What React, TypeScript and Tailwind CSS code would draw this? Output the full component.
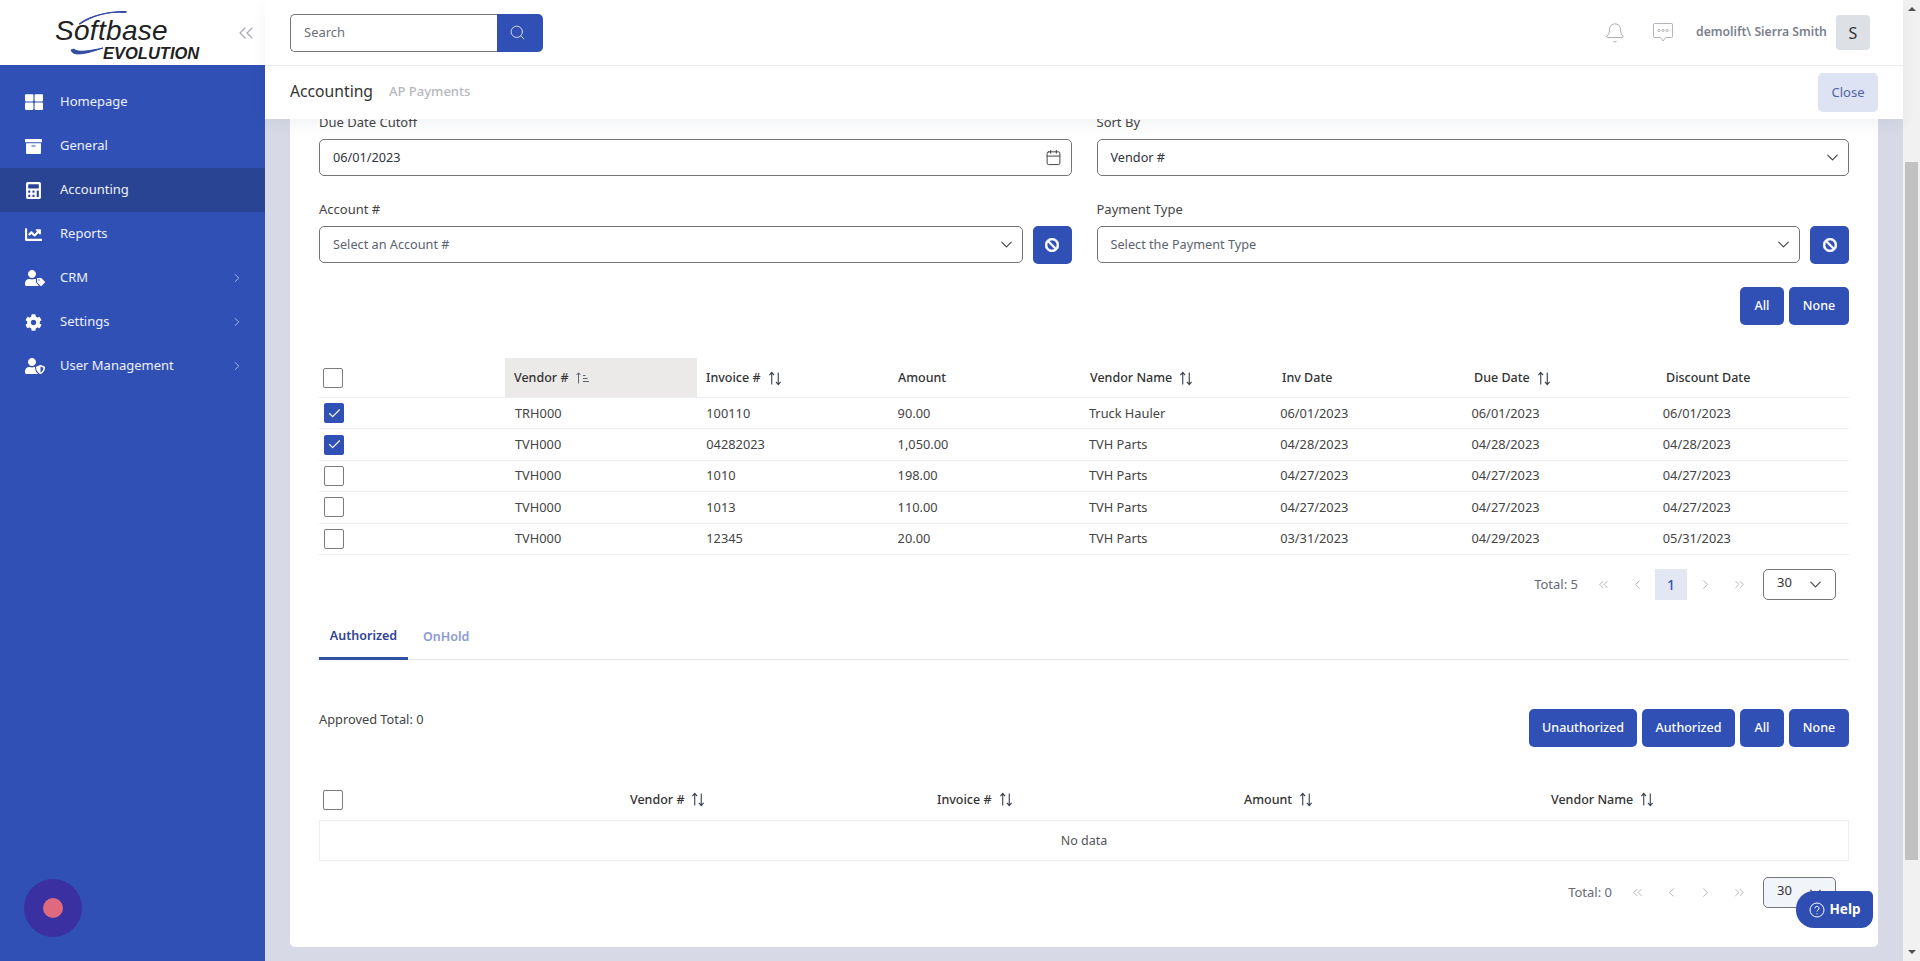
import { Bell, Calendar, ChevronDown, ChevronLeft, ChevronRight, ChevronsLeft, ChevronsRight, Search, Check } from 'lucide-react';
import {
  FaThLarge,
  FaArchive,
  FaCalculator,
  FaChartLine,
  FaUserTag,
  FaCog,
  FaUserShield,
  FaBan,
} from 'react-icons/fa';
import type { IconType } from 'react-icons';

const font = { fontFamily: '"Noto Sans", sans-serif' };

const navItems: { label: string; icon: IconType; active?: boolean; arrow?: boolean; size: number }[] = [
  { label: 'Homepage', icon: FaThLarge, size: 18 },
  { label: 'General', icon: FaArchive, size: 17 },
  { label: 'Accounting', icon: FaCalculator, active: true, size: 17 },
  { label: 'Reports', icon: FaChartLine, size: 17 },
  { label: 'CRM', icon: FaUserTag, arrow: true, size: 20 },
  { label: 'Settings', icon: FaCog, arrow: true, size: 17 },
  { label: 'User Management', icon: FaUserShield, arrow: true, size: 20 },
];

const rows = [
  ['TRH000', '100110', '90.00', 'Truck Hauler', '06/01/2023', '06/01/2023', '06/01/2023'],
  ['TVH000', '04282023', '1,050.00', 'TVH Parts', '04/28/2023', '04/28/2023', '04/28/2023'],
  ['TVH000', '1010', '198.00', 'TVH Parts', '04/27/2023', '04/27/2023', '04/27/2023'],
  ['TVH000', '1013', '110.00', 'TVH Parts', '04/27/2023', '04/27/2023', '04/27/2023'],
  ['TVH000', '12345', '20.00', 'TVH Parts', '03/31/2023', '04/29/2023', '05/31/2023'],
];

function SortIcon() {
  return (
    <svg width="14" height="15" viewBox="0 0 15 16" fill="none" stroke="#3b4250" strokeWidth="1.2">
      <path d="M4 14.5V2M1.500 4.500 4 1.500l2.500 3" />
      <path d="M11 1.500V14M8.500 11.500 11 14.500l2.500-3" />
    </svg>
  );
}

function SortedIcon() {
  return (
    <svg width="15" height="12" viewBox="0 0 15 12" fill="none" stroke="#5b6270" strokeWidth="1">
      <path d="M3.500 11.500V1M1.500 3 3.500 .8 5.500 3" />
      <path d="M8 3.500h2.500M8 6.500h4.500M8 9.500h6" />
    </svg>
  );
}

function CheckBox({ checked }: { checked?: boolean }) {
  return checked ? (
    <span className="flex h-5 w-5 items-center justify-center rounded-[2px] bg-[#3050b5] text-white">
      <Check size={15} strokeWidth={1.8} />
    </span>
  ) : (
    <span className="block h-5 w-5 rounded-[2px] border border-[#7c7c7c] bg-white" />
  );
}

function Field({ value, placeholder, icon }: { value: string; placeholder?: boolean; icon?: 'date' }) {
  return (
    <div
      className={`flex h-[37px] min-w-0 flex-1 items-center justify-between rounded-[5px] border border-[#757575] bg-white pl-[13px] ${
        icon === 'date' ? 'pr-[9px]' : 'pr-[6px]'
      }`}
    >
      <span className={`text-[12.7px] ${placeholder ? 'text-[#5c6370]' : 'text-[#2f3440]'}`}>{value}</span>
      {icon === 'date' ? (
        <Calendar size={17} strokeWidth={1.4} className="text-[#444]" />
      ) : (
        <ChevronDown size={19} strokeWidth={1.4} className="text-[#444]" />
      )}
    </div>
  );
}

function BlueButton({ children, className = '' }: { children: React.ReactNode; className?: string }) {
  return (
    <button className={`flex h-[38px] items-center justify-center rounded-[5px] bg-[#3050b5] text-[12.5px] font-medium text-white ${className}`}>
      {children}
    </button>
  );
}

function ClearButton() {
  return (
    <BlueButton className="w-[39px] shrink-0">
      <FaBan size={14} stroke="currentColor" strokeWidth={30} />
    </BlueButton>
  );
}

function PageSelect({ tinted }: { tinted?: boolean }) {
  return (
    <div
      className={`ml-[7px] flex h-[31px] w-[73px] items-center justify-between rounded-[5px] border border-[#757575] pb-[4px] pl-[13px] pr-[10px] text-[13px] text-[#333] ${
        tinted ? 'bg-[#f1f4f9]' : 'bg-white'
      }`}
    >
      <span>30</span>
      <ChevronDown size={19} strokeWidth={1.4} className="mt-[4px] text-[#444]" />
    </div>
  );
}

function Pager({ total, current }: { total: number; current?: boolean }) {
  const arrow = 'flex h-[31px] w-[34px] items-center justify-center text-[#a0a4ac]';
  return (
    <div className="flex items-center justify-end pr-[13px]">
      <span className="mr-[8px] text-[13px] text-[#666b75]">Total: {total}</span>
      <span className={arrow}><ChevronsLeft size={15} strokeWidth={1.3} /></span>
      <span className={arrow}><ChevronLeft size={15} strokeWidth={1.3} /></span>
      {current && (
        <span className="mx-[1px] flex h-[31px] w-[32px] items-center justify-center bg-[#e3e7f4] text-[14px] font-medium text-[#3050b5]">1</span>
      )}
      <span className={arrow}><ChevronRight size={15} strokeWidth={1.3} /></span>
      <span className={arrow}><ChevronsRight size={15} strokeWidth={1.3} /></span>
      <PageSelect tinted={!current} />
    </div>
  );
}

function Logo() {
  return (
    <div className="relative h-[65px] w-[265px] shrink-0 bg-white">
      <svg className="absolute left-[66px] top-[8px]" width="70" height="50" viewBox="0 0 70 50" fill="none">
        <path d="M13 16C22 8 44 3 60 3.500c1 0 0 1.500-1 1C42 3 26 8 14 16z" fill="#2f4a9f" stroke="#2f4a9f" strokeWidth="1" />
        <path d="M5 42c2 6 12 5 32-2-14 3-26 5-29 1z" fill="#2f4a9f" stroke="#2f4a9f" strokeWidth="1" />
      </svg>
      <span className="absolute left-[55px] top-[13px] text-[28px] leading-[36px] tracking-[0.3px] text-[#222] italic" style={{ fontFamily: '"Liberation Sans", sans-serif' }}>
        Softbase
      </span>
      <span className="absolute left-[103px] top-[43px] text-[16.5px] leading-[20px] font-bold text-[#222] italic" style={{ fontFamily: '"Liberation Sans", sans-serif' }}>
        EVOLUTION
      </span>
      <ChevronsLeft size={24} strokeWidth={1.2} className="absolute left-[234px] top-[21px] text-[#a6a9b0]" />
    </div>
  );
}

function Sidebar() {
  return (
    <aside className="relative flex h-full w-[265px] shrink-0 flex-col bg-[#3050b5]">
      <Logo />
      <nav className="pt-[15px]">
        {navItems.map(({ label, icon: Icon, active, arrow, size }) => (
          <div key={label} className={`flex h-[44px] items-center pl-[25px] pr-[21px] text-white ${active ? 'bg-[#2a4494]' : ''}`}>
            <span className="flex w-[35px] items-center">
              <Icon size={size} />
            </span>
            <span className="flex-1 text-[13px] text-[#eef1fa]">{label}</span>
            {arrow && <ChevronRight size={14} strokeWidth={1.4} className="text-[#c3cdeb]" />}
          </div>
        ))}
      </nav>
      <div className="absolute bottom-[24px] left-[24px] flex h-[58px] w-[58px] items-center justify-center rounded-full bg-[#3a30a2]">
        <span className="h-[20px] w-[20px] rounded-full bg-[#df6a80]" />
      </div>
    </aside>
  );
}

function TopBar() {
  return (
    <header className="relative z-10 shrink-0 bg-white shadow-[0_6px_14px_rgba(40,50,90,0.06)]">
      <div className="flex h-[66px] items-center border-b border-[#e9ebef] pl-[25px] pr-[33px]">
        <div className="flex h-[38px] w-[253px]">
          <div className="flex flex-1 items-center rounded-l-[5px] border border-r-0 border-[#757575] pl-[13px] text-[13px] text-[#6b7078]">
            Search
          </div>
          <div className="flex w-[46px] items-center justify-center rounded-r-[5px] bg-[#3050b5] pr-[5px] text-[#dfe5f6]">
            <Search size={17} strokeWidth={1.3} />
          </div>
        </div>
        <div className="ml-auto flex items-center">
          <Bell size={22} strokeWidth={0.8} className="text-[#8a8e96]" />
          <svg className="ml-[27px]" width="20" height="19" viewBox="0 0 20 19" fill="none" stroke="#a0a4ac" strokeWidth="0.8">
            <path d="M1.500.5h17a1 1 0 0 1 1 1v12a1 1 0 0 1-1 1h-6L10 18l-2.500-3.500h-6a1 1 0 0 1-1-1v-12a1 1 0 0 1 1-1z" />
            <circle cx="6" cy="7.500" r="1.100" />
            <circle cx="10" cy="7.500" r="1.100" />
            <circle cx="14" cy="7.500" r="1.100" />
          </svg>
          <span className="ml-[23px] w-[130px] text-[12.2px] font-semibold whitespace-nowrap text-[#7b7f8c]">demolift\ Sierra Smith</span>
          <span className="ml-[10px] flex h-[35px] w-[34px] items-center justify-center rounded-[4px] bg-[#dde0e4] text-[16px] text-[#333]">S</span>
        </div>
      </div>
      <div className="flex h-[53px] items-center pl-[25px] pr-[25px]">
        <span className="-mt-[2px] text-[15.7px] text-[#333]">Accounting</span>
        <span className="-mt-[2px] ml-[16px] text-[13px] font-medium text-[#b5b7bc]">AP Payments</span>
        <button className="ml-auto flex h-[39px] w-[60px] items-center justify-center rounded-[5px] bg-[#dde3f3] text-[13px] text-[#5264a8]">
          Close
        </button>
      </div>
    </header>
  );
}

function PaymentsTable() {
  const headers = ['Invoice #', 'Amount', 'Vendor Name', 'Inv Date', 'Due Date', 'Discount Date'];
  const sortable = ['Invoice #', 'Vendor Name', 'Due Date'];
  return (
    <div className="mt-[33px]">
      <div className="grid h-[40px] grid-cols-[186px_repeat(7,192px)] items-center border-b border-[#eceef1]">
        <div className="pl-[4px]"><CheckBox /></div>
        <div className="flex h-full items-center gap-[7px] bg-[#ebeae8] pl-[9px] pt-[1px] text-[12.5px] font-medium text-[#333]">
          Vendor # <SortedIcon />
        </div>
        {headers.map((h) => (
          <div key={h} className="flex items-center gap-[7px] pl-[9px] pt-[1px] text-[12.5px] font-medium text-[#333]">
            {h} {sortable.includes(h) && <SortIcon />}
          </div>
        ))}
      </div>
      {rows.map((row, i) => (
        <div key={i} className="grid h-[31.4px] grid-cols-[186px_repeat(7,191.300px)] items-center border-b border-[#eceef1]">
          <div className="pl-[5px]"><CheckBox checked={i < 2} /></div>
          {row.map((cell, j) => (
            <div key={j} className="pl-[10px] text-[12.8px] text-[#444]">{cell}</div>
          ))}
        </div>
      ))}
    </div>
  );
}

function ApprovedTable() {
  return (
    <div className="mt-[33px]">
      <div className="grid h-[40px] grid-cols-[303px_repeat(4,307px)] items-center">
        <div className="pl-[4px]"><CheckBox /></div>
        {['Vendor #', 'Invoice #', 'Amount', 'Vendor Name'].map((h) => (
          <div key={h} className="flex items-center gap-[7px] pl-[8px] text-[12.5px] font-medium text-[#333]">
            {h} <SortIcon />
          </div>
        ))}
      </div>
      <div className="flex h-[41px] items-center justify-center border border-[#eceef1] pt-[1px] text-[12.5px] text-[#555]">No data</div>
    </div>
  );
}

function FakeScrollbar() {
  return (
    <div className="flex h-full w-[17px] shrink-0 flex-col items-center bg-[#f1f1f1]">
      <span className="mt-[7px] h-0 w-0 border-x-[4px] border-b-[4px] border-x-transparent border-b-[#505050]" />
      <span className="mt-[151px] h-[698px] w-[13px] bg-[#c1c1c1]" />
      <span className="mt-auto mb-[7px] h-0 w-0 border-x-[4px] border-t-[4px] border-x-transparent border-t-[#505050]" />
    </div>
  );
}

export default function App() {
  return (
    <div className="relative flex h-screen w-full overflow-hidden bg-[#d7d9e6]" style={font}>
      <Sidebar />
      <div className="flex h-full min-w-0 flex-1 flex-col">
        <TopBar />
        <main className="min-h-0 flex-1 overflow-hidden px-[25px]">
          <div className="-mt-[7px] rounded-b-[5px] bg-white px-[29px] pb-[39px]">
            <div className="flex gap-[25px]">
              <div className="min-w-0 flex-1">
                <label className="block h-[27px] text-[13px] leading-[20px] text-[#444]">Due Date Cutoff</label>
                <div className="flex"><Field value="06/01/2023" icon="date" /></div>
              </div>
              <div className="min-w-0 flex-1">
                <label className="block h-[27px] text-[13px] leading-[20px] text-[#444]">Sort By</label>
                <div className="flex"><Field value="Vendor #" /></div>
              </div>
            </div>
            <div className="mt-[23px] flex gap-[25px]">
              <div className="min-w-0 flex-1">
                <label className="block h-[27px] text-[13px] leading-[20px] text-[#444]">Account #</label>
                <div className="flex items-start gap-[10px]"><Field value="Select an Account #" placeholder /><ClearButton /></div>
              </div>
              <div className="min-w-0 flex-1">
                <label className="block h-[27px] text-[13px] leading-[20px] text-[#444]">Payment Type</label>
                <div className="flex items-start gap-[10px]"><Field value="Select the Payment Type" placeholder /><ClearButton /></div>
              </div>
            </div>
            <div className="mt-[23px] flex justify-end gap-[5px]">
              <BlueButton className="w-[44px]">All</BlueButton>
              <BlueButton className="w-[60px]">None</BlueButton>
            </div>
            <PaymentsTable />
            <div className="mt-[14px]"><Pager total={5} current /></div>
            <div className="mt-[15px] flex h-[45px] border-b border-[#e3e5ea] text-[12.5px] font-semibold">
              <div className="flex h-[45px] w-[89px] items-center justify-center border-b-[3px] border-[#3050a0] text-[#2f4494]">Authorized</div>
              <div className="ml-[15px] flex h-[45px] items-center text-[#8b9ad0]">OnHold</div>
            </div>
            <div className="mt-[49px] flex items-start justify-between">
              <span className="text-[12.8px] leading-[20px] text-[#444]">Approved Total: 0</span>
              <div className="flex gap-[5px]">
                <BlueButton className="w-[108px]">Unauthorized</BlueButton>
                <BlueButton className="w-[93px]">Authorized</BlueButton>
                <BlueButton className="w-[44px]">All</BlueButton>
                <BlueButton className="w-[60px]">None</BlueButton>
              </div>
            </div>
            <ApprovedTable />
            <div className="mt-[16px]"><Pager total={0} /></div>
          </div>
        </main>
      </div>
      <FakeScrollbar />
      <button className="absolute bottom-[33px] left-[1796px] flex h-[37px] w-[77px] items-center justify-center gap-[5px] rounded-[18px] rounded-tr-[5px] rounded-br-[12px] bg-[#2f4eb2] text-[13.5px] font-bold text-white">
        <svg width="16" height="16" viewBox="0 0 16 16" fill="none" stroke="white" strokeWidth="1">
          <circle cx="8" cy="8" r="7" />
          <path d="M6 6.300a2 2 0 1 1 3 1.700c-.7.400-1 .8-1 1.500" />
          <path d="M8 11.300v1" />
        </svg>
        Help
      </button>
    </div>
  );
}
